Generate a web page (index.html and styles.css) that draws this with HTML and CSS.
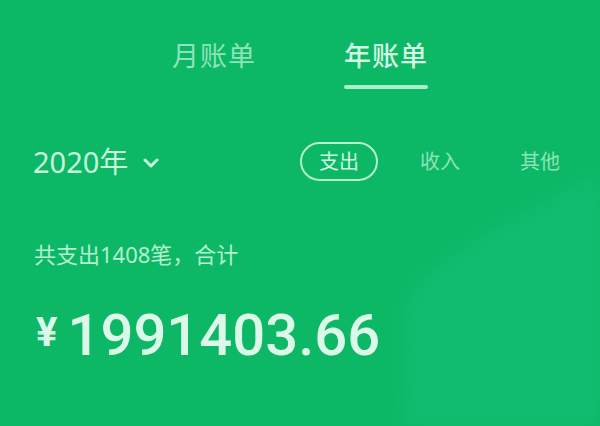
FILE: index.html
```html
<!DOCTYPE html>
<html lang="zh-CN">
<head>
<meta charset="utf-8">
<link rel="stylesheet" href="styles.css">
</head>
<body>
<div class="page">
  <div class="deco"><div class="deco-shape"></div></div>
  <div class="content">
    <nav class="tabs">
      <div class="tab">月账单</div>
      <div class="tab active">年账单</div>
    </nav>
    <div class="filters">
      <div class="year">2020年
        <svg class="chev" width="16" height="10" viewBox="0 0 16 10"><path d="M2 2 L8 8 L14 2" fill="none" stroke="#c9f5dc" stroke-width="3" stroke-linecap="round" stroke-linejoin="round"/></svg>
      </div>
      <div class="types">
        <div class="type selected">支出</div>
        <div class="type mid">收入</div>
        <div class="type">其他</div>
      </div>
    </div>
    <div class="summary">共支出1408笔，合计</div>
    <div class="amount"><span class="yen">¥</span><span class="num">1991403.66</span></div>
  </div>
</div>
</body>
</html>
```

FILE: styles.css
```css
html, body {
  margin: 0;
  padding: 0;
}
body {
  width: 600px;
  height: 426px;
  overflow: hidden;
  background: #0cb866;
  font-family: "Noto Sans", "Noto Sans CJK SC", sans-serif;
}
.page {
  position: relative;
  width: 600px;
  height: 426px;
  overflow: hidden;
  background: #0cb866;
}
.deco {
  position: absolute;
  inset: 0;
  filter: blur(10px);
}
.deco-shape {
  width: 100%;
  height: 100%;
  background: #11bc71;
  clip-path: polygon(640px 150px, 600px 175px, 530px 212px, 470px 245px, 418px 283px, 406px 310px, 402px 480px, 640px 480px);
}
.content {
  position: relative;
}
.tabs {
  display: flex;
  justify-content: center;
  gap: 88px;
  padding-top: 36px;
}
.tab {
  position: relative;
  font-size: 27px;
  line-height: 40px;
  color: #8ee3b8;
  letter-spacing: 1px;
}
.tab.active {
  color: #d2f7e2;
  font-weight: 500;
}
.tab.active::after {
  content: "";
  position: absolute;
  left: 0;
  right: 0;
  top: 49px;
  height: 4px;
  border-radius: 2px;
  background: #a9efc9;
}
.filters {
  display: flex;
  align-items: center;
  justify-content: space-between;
  margin-top: 66px;
  padding: 0 40px 0 33px;
}
.year {
  display: flex;
  align-items: center;
  gap: 15px;
  font-size: 29px;
  line-height: 36px;
  color: #c9f5dc;
}
.chev {
  margin-top: 2px;
}
.types {
  display: flex;
  align-items: center;
}
.type {
  font-size: 20px;
  line-height: 25px;
  color: #8ee3b8;
  padding: 5px 0;
}
.type.selected {
  color: #d2f7e2;
  border: 2px solid #b5f0cf;
  border-radius: 20px;
  padding: 5px 17px;
  margin-right: 42px;
}
.type.mid {
  margin-right: 60px;
}
.summary {
  margin-top: 59px;
  padding-left: 34px;
  font-size: 22px;
  line-height: 28px;
  color: #b4efcf;
}
.amount {
  display: flex;
  align-items: flex-start;
  margin-top: 37px;
  padding-left: 36px;
  color: #dbf8e8;
}
.yen {
  font-family: Roboto, "Liberation Sans", sans-serif;
  font-weight: 700;
  font-size: 40px;
  line-height: 40px;
  margin-top: 8px;
  margin-right: 10px;
}
.num {
  font-family: Roboto, "Liberation Sans", sans-serif;
  font-weight: 500;
  font-size: 58px;
  line-height: 60px;
}
```
